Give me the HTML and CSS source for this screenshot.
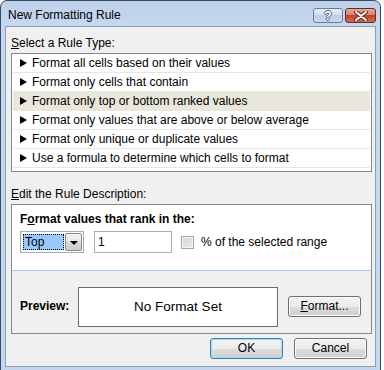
FILE: index.html
```html
<!DOCTYPE html>
<html lang="en">
<head>
    <meta charset="UTF-8">
    <title>New Formatting Rule</title>
    <link rel="stylesheet" href="styles.css">
</head>
<body>
    <div class="window">
        <div class="titlebar">
            <span class="title">New Formatting Rule</span>
            <div class="caption-buttons">
                <div class="cap-btn help-btn"><span>?</span></div>
                <div class="cap-btn close-btn">
                    <svg width="16" height="10" viewBox="0 0 16 10">
                        <path d="M3 1 L13 9 M13 1 L3 9" stroke="#5a2a22" stroke-width="4" stroke-linecap="round"/>
                        <path d="M3 1 L13 9 M13 1 L3 9" stroke="#ffffff" stroke-width="2" stroke-linecap="round"/>
                    </svg>
                </div>
            </div>
        </div>

        <div class="client">
            <div class="group-label"><u>S</u>elect a Rule Type:</div>
            <ul class="rule-list">
                <li><span class="arrow"></span>Format all cells based on their values</li>
                <li><span class="arrow"></span>Format only cells that contain</li>
                <li class="selected"><span class="arrow"></span>Format only top or bottom ranked values</li>
                <li><span class="arrow"></span>Format only values that are above or below average</li>
                <li><span class="arrow"></span>Format only unique or duplicate values</li>
                <li><span class="arrow"></span>Use a formula to determine which cells to format</li>
            </ul>

            <div class="group-label desc-label"><u>E</u>dit the Rule Description:</div>
            <div class="desc-box">
                <div class="desc-top">
                    <div class="desc-title">F<u>o</u>rmat values that rank in the:</div>
                    <div class="controls-row">
                        <div class="combo">
                            <div class="combo-value"><span>Top</span></div>
                            <div class="combo-btn"><span class="combo-arrow"></span></div>
                        </div>
                        <div class="num-input">1</div>
                        <div class="checkbox"></div>
                        <span class="check-label">% of the selected ran<u>g</u>e</span>
                    </div>
                </div>
                <div class="desc-preview">
                    <span class="preview-label">Preview:</span>
                    <div class="preview-box">No Format Set</div>
                    <div class="btn format-btn"><u>F</u>ormat...</div>
                </div>
            </div>

            <div class="dialog-buttons">
                <div class="btn default-btn">OK</div>
                <div class="btn">Cancel</div>
            </div>
        </div>
    </div>
</body>
</html>
```

FILE: styles.css
```css
:root {
    --frame-color: #c4d6ed;
    --frame-dark: #3a4a60;
    --client-border: #8a9fbb;
    --dialog-bg: #f0f0f0;
    --box-border: #828790;
    --text-color: #000;
}

* {
    margin: 0;
    padding: 0;
    box-sizing: border-box;
}

body {
    font-family: 'Liberation Sans', Arial, sans-serif;
    font-size: 12px;
    line-height: 15px;
    color: var(--text-color);
    background-color: #fff;
    overflow: hidden;
    height: 370px;
}

u {
    text-decoration: underline;
    text-underline-offset: 1px;
}

.window {
    width: 381px;
    height: 372px;
    border: 1px solid var(--frame-dark);
    border-radius: 7px 7px 0 0;
    background: linear-gradient(#bcd0ea, #c6d8ee 24px, var(--frame-color));
    padding: 0 4px 4px;
    display: flex;
    flex-direction: column;
}

/* title bar */
.titlebar {
    height: 25px;
    display: flex;
    justify-content: space-between;
    align-items: flex-start;
}

.title {
    padding: 7px 0 0 3px;
    color: #000;
}

.caption-buttons {
    display: flex;
    gap: 2px;
    margin-top: 7px;
}

.cap-btn {
    height: 15px;
    border: 1px solid #6c7b90;
    border-radius: 3px;
    display: flex;
    align-items: center;
    justify-content: center;
}

.help-btn {
    width: 30px;
    background: linear-gradient(#e4ecf6, #d3e0ef 45%, #bccfe6 50%, #c9daee);
}

.help-btn span {
    font-weight: bold;
    font-size: 12px;
    line-height: 12px;
    color: #fff;
    text-shadow: 1px 0 0 #55657a, -1px 0 0 #55657a, 0 1px 0 #55657a, 0 -1px 0 #55657a;
}

.close-btn {
    width: 31px;
    border-color: #6a2c22;
    background: linear-gradient(#e9a99b, #d8806c 45%, #c3432b 50%, #d46a52);
}

/* client area */
.client {
    flex: 1;
    border: 1px solid var(--client-border);
    background-color: var(--dialog-bg);
    padding: 9px 0 0 5px;
}

.group-label {
    height: 16px;
    padding-left: 0;
}

.rule-list {
    list-style: none;
    width: 361px;
    height: 119px;
    margin-top: 1px;
    border: 1px solid var(--box-border);
    background-color: #fff;
    padding: 0 1px;
}

.rule-list li {
    height: 19px;
    line-height: 18px;
    border-bottom: 1px solid #e6e6e6;
    padding-left: 7px;
    display: flex;
    align-items: center;
}

.rule-list li.selected {
    background-color: #e9e6dc;
    border-bottom-color: #e9e6dc;
}

.arrow {
    width: 0;
    height: 0;
    border-top: 4px solid transparent;
    border-bottom: 4px solid transparent;
    border-left: 7px solid #000;
    margin-right: 5px;
}

.desc-label {
    margin-top: 15px;
}

.desc-box {
    width: 361px;
    height: 130px;
    margin-top: 1px;
    border: 1px solid var(--box-border);
    display: flex;
    flex-direction: column;
}

.desc-top {
    background-color: #fff;
    border-bottom: 1px solid #a7c8ec;
    padding: 7px 0 0 8px;
    height: 66px;
}

.desc-title {
    font-weight: bold;
}

.controls-row {
    display: flex;
    align-items: center;
    margin-top: 4px;
    height: 22px;
}

.combo {
    width: 64px;
    height: 22px;
    border: 1px solid #a5acb5;
    background-color: #fff;
    display: flex;
    align-items: center;
    padding: 1px 1px 1px 2px;
    gap: 1px;
}

.combo-value {
    flex: 1;
    height: 16px;
    background-color: #99c8ff;
    border: 1px dotted #000;
    line-height: 14px;
    padding-left: 1px;
}

.combo-btn {
    width: 17px;
    height: 18px;
    border: 1px solid #8a8a8a;
    border-radius: 2px;
    background: linear-gradient(#f4f4f4, #e6e6e6 50%, #d6d6d6 51%, #cfcfcf);
    display: flex;
    align-items: center;
    justify-content: center;
}

.combo-arrow {
    width: 0;
    height: 0;
    border-left: 4px solid transparent;
    border-right: 4px solid transparent;
    border-top: 4px solid #000;
    margin-top: 1px;
}

.num-input {
    width: 78px;
    height: 22px;
    margin-left: 10px;
    border: 1px solid #abadb3;
    background-color: #fff;
    line-height: 20px;
    padding-left: 3px;
}

.checkbox {
    width: 13px;
    height: 13px;
    margin-left: 9px;
    border: 1px solid #a6a6a6;
    background: linear-gradient(135deg, #d4d4d4, #ececec);
    box-shadow: inset 0 0 0 1px #f4f4f4;
}

.check-label {
    margin-left: 7px;
}

.desc-preview {
    flex: 1;
    display: flex;
    align-items: center;
    padding: 9px 0 0 8px;
}

.preview-label {
    font-weight: bold;
    width: 58px;
}

.preview-box {
    width: 200px;
    height: 40px;
    border: 1px solid #6d6d6d;
    background-color: #fff;
    font-size: 13.5px;
    display: flex;
    align-items: center;
    justify-content: center;
}

.btn {
    width: 73px;
    height: 21px;
    border: 1px solid #707070;
    border-radius: 3px;
    background: linear-gradient(#f2f2f2, #ebebeb 50%, #dddddd 51%, #cfcfcf);
    box-shadow: inset 0 0 0 1px #fbfbfb;
    text-align: center;
    line-height: 19px;
}

.format-btn {
    margin-left: 10px;
}

.dialog-buttons {
    display: flex;
    justify-content: flex-end;
    gap: 11px;
    margin-top: 4px;
    padding-right: 8px;
}

.default-btn {
    border-color: #3c7fb1;
    box-shadow: inset 0 0 0 1px #9fdcf8;
}
```
